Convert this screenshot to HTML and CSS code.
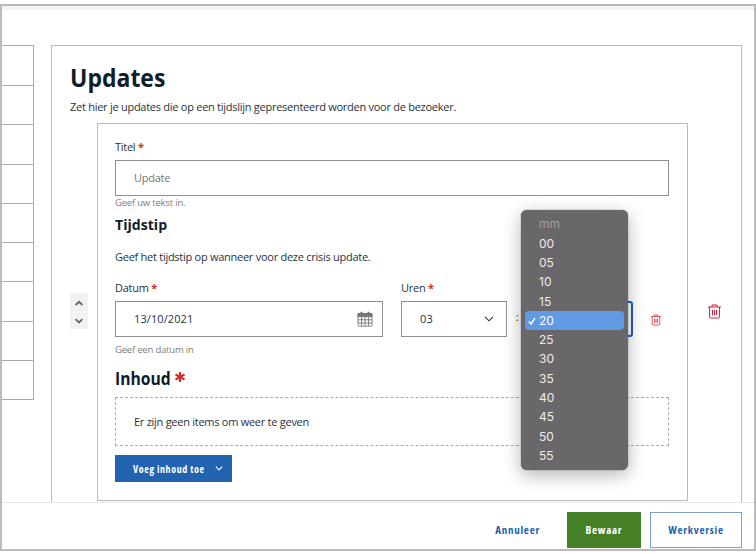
FILE: index.html
```html
<!DOCTYPE html>
<html lang="nl">
<head>
<meta charset="utf-8">
<title>Updates</title>
<link rel="stylesheet" href="styles.css">
</head>
<body>
<div class="window">
  <div class="content">
    <div class="side"><i></i><i></i><i></i><i></i><i></i><i></i><i></i><i></i><i></i></div>
    <main class="panel">
      <h1>Updates</h1>
      <p class="intro">Zet hier je updates die op een tijdslijn gepresenteerd worden voor de bezoeker.</p>
      <div class="item-row">
        <div class="sorter">
          <svg width="18" height="36" viewBox="0 0 18 36"><path d="M5.6 12 9 8.8l3.4 3.2M5.6 26.2 9 29.4l3.4-3.2"/></svg>
        </div>
        <section class="item">
          <label class="lab-title">Titel <b>*</b></label>
          <div class="field placeholder">Update</div>
          <small class="help-title">Geef uw tekst in.</small>
          <h3>Tijdstip</h3>
          <p class="desc">Geef het tijdstip op wanneer voor deze crisis update.</p>
          <div class="moment">
            <div class="date">
              <label>Datum <b>*</b></label>
              <div class="field"><span class="num">13/10/2021</span>
                <svg class="cal" width="16" height="16" viewBox="0 0 16 16"><rect x="1" y="2.5" width="14" height="12.7" rx="1"/><path class="fill" d="M1 2.5h14v3.2H1z"/><path d="M1 8.8h14M1 12h14M4.5 5.5v9.5M8 5.5v9.5M11.5 5.5v9.5"/><path class="ring" d="M4.5.8v3M11.5.8v3"/></svg>
              </div>
              <small class="help-date">Geef een datum in</small>
            </div>
            <div class="hours">
              <label>Uren <b>*</b></label>
              <div class="field"><span class="num">03</span>
                <svg class="chev" width="10" height="6" viewBox="0 0 10 6"><path d="M1 .8 5 4.8 9 .8"/></svg>
              </div>
            </div>
            <div class="colon">:</div>
            <div class="minutes">
              <div class="field"></div>
              <ul class="menu">
                <li class="muted">mm</li><li>00</li><li>05</li><li>10</li><li>15</li>
                <li class="on"><svg width="8" height="8" viewBox="0 0 8 8"><path d="M.8 4.5 3 7 7 1"/></svg>20</li>
                <li>25</li><li>30</li><li>35</li><li>40</li><li>45</li><li>50</li><li>55</li>
              </ul>
            </div>
            <svg class="trash small" width="10" height="12" viewBox="0 0 13 15"><path d="M0 3h13M4 3V1h5v2M1.6 3v10.2q0 .8.8.8h8.2q.8 0 .8-.8V3M4.5 5.8v5.5M6.5 5.8v5.5M8.5 5.8v5.5"/></svg>
          </div>
          <div class="heading"><h2>Inhoud</h2><svg width="10" height="10" viewBox="0 0 10 10"><path d="M5 0v10M.5 2.5l9 5M9.5 2.5l-9 5"/></svg></div>
          <div class="empty">Er zijn geen items om weer te geven</div>
          <button class="add">Voeg inhoud toe<svg class="chev" width="8" height="5" viewBox="0 0 8 5"><path d="M.8.6 4 3.9 7.2.6"/></svg></button>
        </section>
        <svg class="trash" width="13" height="15" viewBox="0 0 13 15"><path d="M0 3h13M4 3V1h5v2M1.6 3v10.2q0 .8.8.8h8.2q.8 0 .8-.8V3M4.5 5.8v5.5M6.5 5.8v5.5M8.5 5.8v5.5"/></svg>
      </div>
    </main>
  </div>
  <footer>
    <button class="cancel">Annuleer</button>
    <button class="save">Bewaar</button>
    <button class="draft">Werkversie</button>
  </footer>
</div>
</body>
</html>
```
FILE: styles.css
```css
* { box-sizing: border-box; }
body { margin: 0; padding-top: 4px; height: 554px; overflow: hidden; background: #fff; color: #26323d; font: 11px/16px "Open Sans", "Noto Sans", sans-serif; letter-spacing: -.265px; }
h1, h2, h3, p, ul { margin: 0; padding: 0; }
h1, h2, h3 { color: #0f1d2b; letter-spacing: 0; transform-origin: left; }
svg { fill: none; stroke: currentColor; display: block; }
.window { height: 547px; border: 2px solid #bbb; display: flex; flex-direction: column; }
.content { height: 496px; border-top: 4px solid #f3f3f3; padding-top: 35px; display: flex; gap: 17px; overflow: hidden; flex: none; }
.side { width: 32px; height: 355px; border: 1px solid #aaa; border-left: 0; display: grid; grid-template-rows: repeat(9, 1fr); flex: none; }
.side i + i { border-top: 1px solid #aaa; }
.panel { width: 691px; height: 480px; border: 1px solid #bbb; padding: 15px 17px 0 18px; flex: none; }
h1 { font-size: 25px; font-weight: 700; line-height: 32px; transform: scaleX(.92); }
.intro { margin-top: 6px; }
.item-row { display: flex; margin-top: 8px; }
.sorter { width: 18px; height: 36px; margin: 170px 9px 0 0; background: #f2f2f2; color: #666; flex: none; }
.sorter svg { stroke-width: 1.8; }
.item { width: 591px; height: 378px; border: 1px solid #bbb; padding: 15px 18px 0 17px; flex: none; }
.item b { color: #d32f24; }
label { display: block; height: 16px; }
.field { height: 36px; border: 1px solid #909090; padding: 0 18px; display: flex; align-items: center; justify-content: space-between; }
.lab-title + .field { margin-top: 5px; }
.placeholder { color: #777; }
small { display: block; color: #7d7d7d; font-size: 9.5px; line-height: 13px; letter-spacing: -.2px; }
h3 { font-size: 15px; line-height: 20px; margin-top: 5px; transform: scaleX(.94); }
.desc { margin-top: 15px; }
.moment { display: flex; margin-top: 15px; height: 76px; }
.moment label + .field { margin-top: 5px; }
.date { width: 268px; margin-right: 18px; }
.date .field { padding-right: 9px; }
.num { letter-spacing: .1px; }
.help-date { margin-top: 6px; }
.hours { width: 106px; }
.hours .field { padding-right: 12px; }
.cal { color: #777; stroke-width: .9; }
.cal .fill { fill: #777; }
.cal .ring { stroke-width: 2; }
.chev { stroke-width: 1.1; }
.colon { width: 20px; margin-top: 29px; text-align: center; }
.minutes { width: 106px; margin-top: 21px; position: relative; }
.minutes .field { border: 2px solid #1c5fc4; border-radius: 3px; }
.menu { position: absolute; left: -6px; top: -91px; width: 107px; height: 260px; padding: 4.4px 4px 4px; list-style: none; background: #69676a; border-radius: 6px; box-shadow: 0 5px 18px rgba(0,0,0,.3), 0 0 1px #333; color: #eee; font: 12px/19.3px Inter, sans-serif; letter-spacing: 0; }
.menu li { height: 19.3px; padding-left: 14px; position: relative; }
.menu .muted { color: #a09ea1; }
.menu .on { background: #6199e5; border-radius: 4px; color: #fff; }
.menu .on svg { position: absolute; left: 3px; top: 6px; stroke-width: 1.5; }
.trash { color: #c4213b; margin: 181px 0 0 20px; }
.trash.small { color: #d65668; margin: 34px 0 0 18px; stroke-width: 1.3; }
.heading { display: flex; margin-top: 10px; }
h2 { width: 60px; font-size: 18px; line-height: 24px; transform: scaleX(.87); }
.heading svg { color: #d32f24; stroke-width: 2.2; margin-top: 6px; }
.empty { height: 49px; margin-top: 7px; border: 1px dashed #aaa; padding: 0 18px; display: flex; align-items: center; }
button { border: 0; background: none; font: bold 11px/16px "Open Sans", sans-serif; font-stretch: 75%; letter-spacing: .75px; padding: 0; white-space: nowrap; }
.add { display: flex; align-items: center; justify-content: space-between; width: 117px; height: 27px; margin-top: 9px; padding: 0 9px 0 18px; background: #2263b0; color: #fff; font-size: 10px; letter-spacing: .6px; }
footer { flex: 1; border-top: 1px solid #e6e6e6; padding: 9px 12px 0 0; display: flex; justify-content: flex-end; }
footer button { height: 36px; color: #2263b0; }
.cancel { margin-right: 27px; }
footer .save { width: 74px; background: #458026; color: #fff; margin-right: 9px; }
.draft { width: 92px; border: 1px solid #7f9fd4; }
```
